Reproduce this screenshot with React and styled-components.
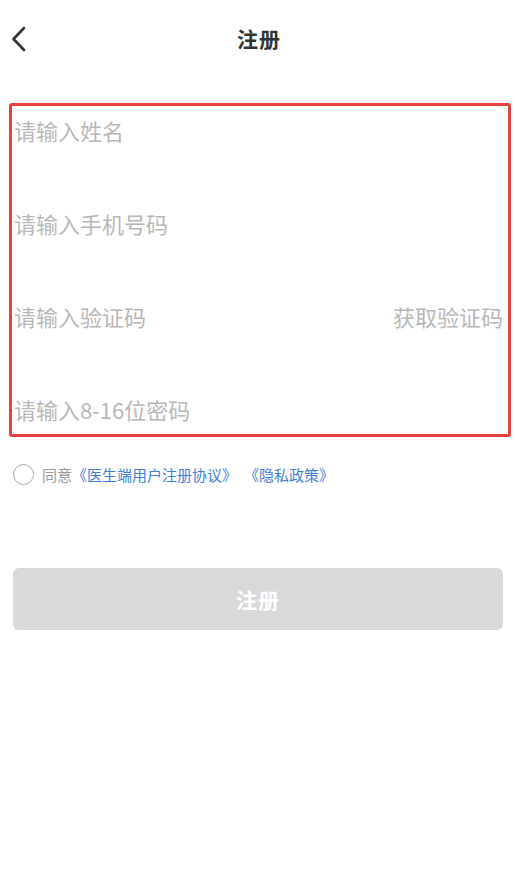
import styled, { createGlobalStyle } from "styled-components";

const GlobalStyle = createGlobalStyle`
  html, body {
    margin: 0;
    padding: 0;
    background: #fff;
    font-family: "Noto Sans CJK SC", "Noto Sans", sans-serif;
  }
  * { box-sizing: border-box; }
`;

const fields = [
  { key: "name", placeholder: "请输入姓名" },
  { key: "phone", placeholder: "请输入手机号码", type: "tel" },
  { key: "code", placeholder: "请输入验证码", action: "获取验证码" },
  { key: "pwd", placeholder: "请输入8-16位密码", type: "password" },
];

export default function App() {
  return (
    <Page>
      <GlobalStyle />
      <NavBar>
        <BackBtn aria-label="返回">
          <svg width="16" height="26" viewBox="0 0 16 26">
            <path d="M13 2 L2.5 13 L13 24" fill="none" stroke="#333" strokeWidth="2.6" strokeLinecap="round" strokeLinejoin="round" />
          </svg>
        </BackBtn>
        <NavTitle>注册</NavTitle>
      </NavBar>

      <FormBox>
        {fields.map((f) => (
          <Row key={f.key}>
            <Input type={f.type || "text"} placeholder={f.placeholder} />
            {f.action && <CodeBtn>{f.action}</CodeBtn>}
          </Row>
        ))}
      </FormBox>

      <Agree>
        <Radio />
        <AgreeText>同意</AgreeText>
        <Link>《医生端用户注册协议》</Link>
        <Link $spaced>《隐私政策》</Link>
      </Agree>

      <SubmitBtn disabled>注册</SubmitBtn>
    </Page>
  );
}

const Page = styled.div`
  width: 515px;
  min-height: 892px;
  background: #fff;
  display: flex;
  flex-direction: column;
`;

const NavBar = styled.div`
  position: relative;
  height: 78px;
  display: flex;
  align-items: center;
  justify-content: center;
`;

const BackBtn = styled.button`
  position: absolute;
  left: 11px;
  top: 26px;
  border: none;
  background: none;
  padding: 0;
  display: flex;
`;

const NavTitle = styled.h1`
  margin: 0 0 2px 3px;
  font-size: 21px;
  font-weight: 700;
  color: #333;
  letter-spacing: 1px;
`;

const FormBox = styled.div`
  margin: 25px 4px 0 9px;
  border: 3px solid #e8413f;
  border-radius: 3px;
  height: 334px;
  padding: 2px 5px 0 2px;
  display: flex;
  flex-direction: column;
  gap: 49px;
`;

const Row = styled.div`
  height: 44px;
  display: flex;
  align-items: center;
`;

const Input = styled.input`
  flex: 1;
  min-width: 0;
  border: none;
  outline: none;
  padding: 0;
  font-family: inherit;
  font-size: 22px;
  color: #333;
  background: transparent;

  &::placeholder {
    color: #b8b8b8;
  }
`;

const CodeBtn = styled.span`
  font-size: 22px;
  color: #b8b8b8;
  white-space: nowrap;
`;

const Agree = styled.div`
  display: flex;
  align-items: center;
  margin: 27px 0 0 13px;
  font-size: 15px;
`;

const Radio = styled.span`
  width: 21px;
  height: 21px;
  border: 1.5px solid #aaa;
  border-radius: 50%;
  margin-right: 8px;
`;

const AgreeText = styled.span`
  color: #9a9a9a;
`;

const Link = styled.span`
  color: #3f7fd6;
  margin-left: ${(p) => (p.$spaced ? "7px" : "0")};
`;

const SubmitBtn = styled.button`
  margin: 83px 12px 0 13px;
  height: 62px;
  border: none;
  border-radius: 6px;
  background: #d9d9db;
  color: #fff;
  font-family: inherit;
  font-size: 21px;
  font-weight: 700;
  letter-spacing: 1px;
`;
